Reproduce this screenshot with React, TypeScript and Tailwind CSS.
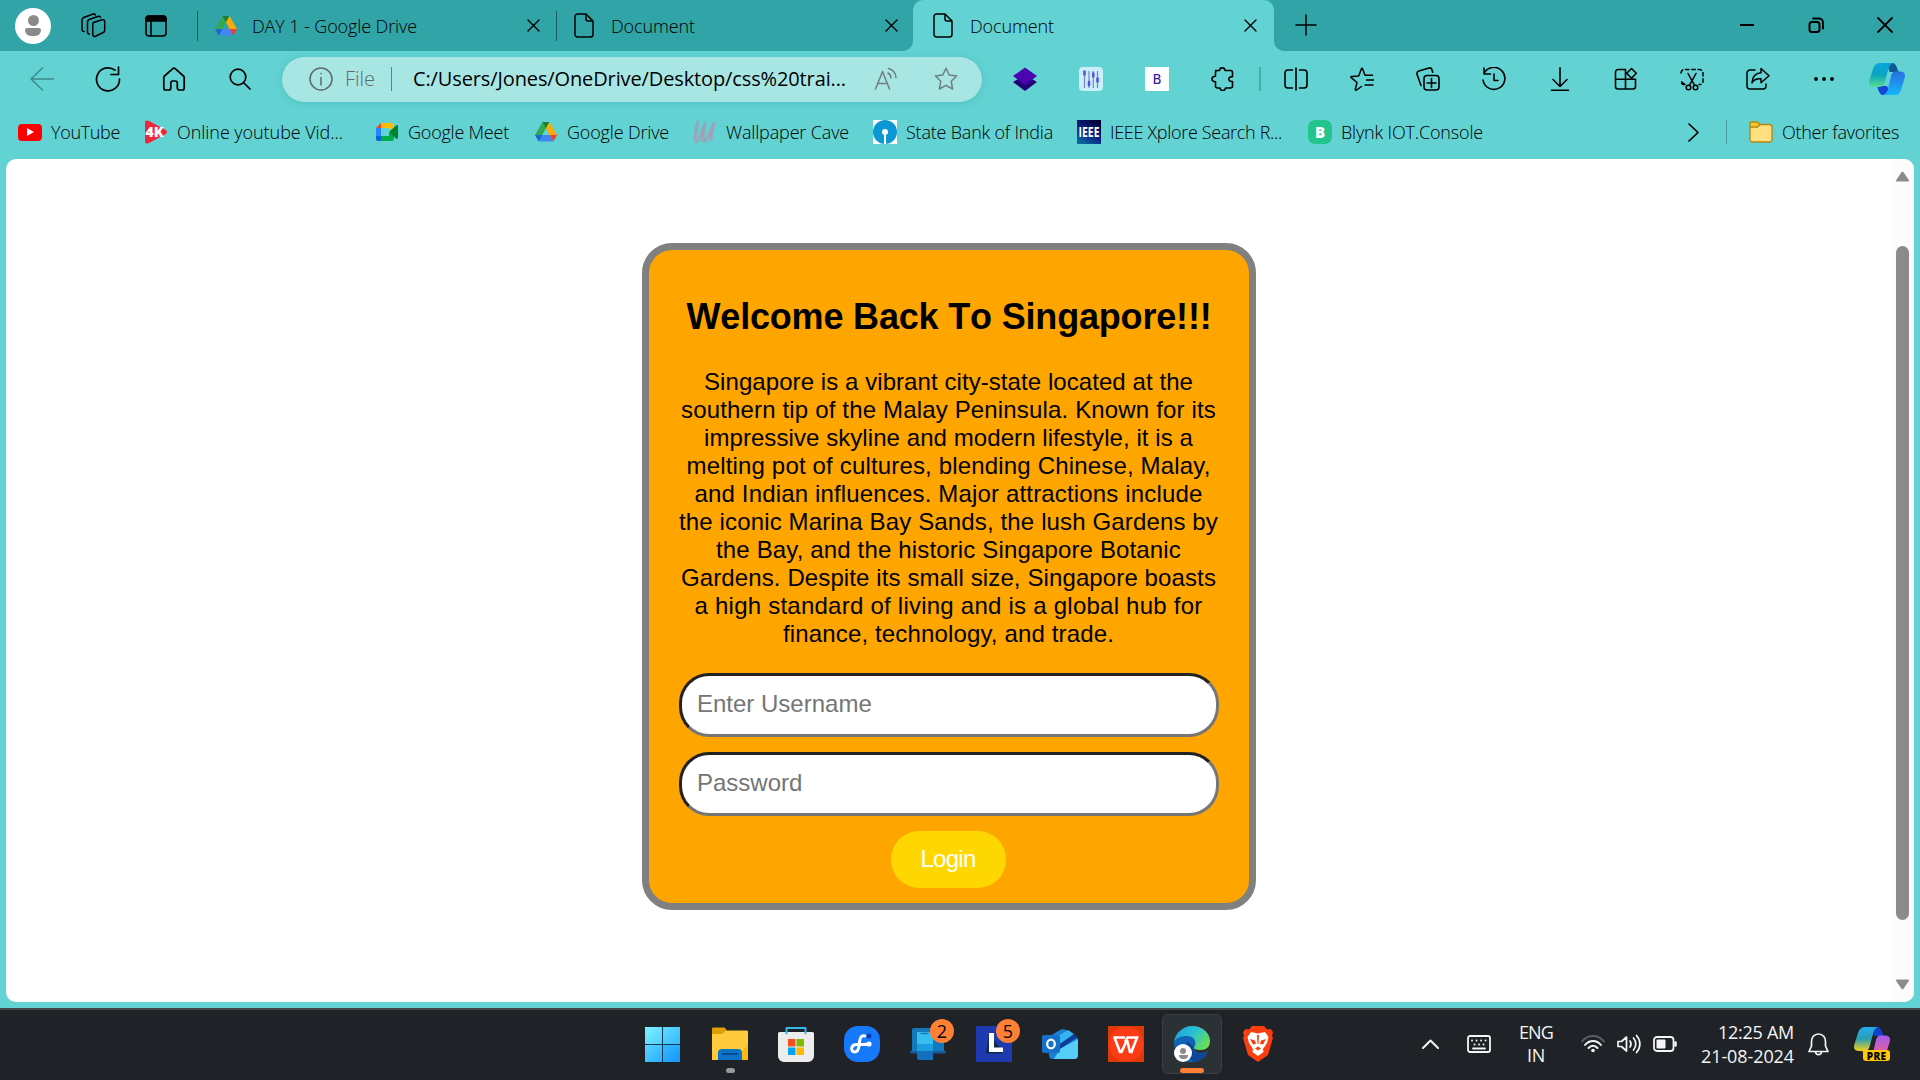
import React, { Fragment, ReactNode, useLayoutEffect, useRef } from "react";

/** Text whose tracking is set at run time so that it fills a given width. */
function Fit({ w, className = "", children }: { w: number; className?: string; children: string }) {
  const ref = useRef<HTMLSpanElement>(null);
  useLayoutEffect(() => {
    const el = ref.current;
    if (!el) return;
    el.style.letterSpacing = "0px";
    const natural = el.getBoundingClientRect().width;
    el.style.letterSpacing = `${(w - natural) / children.length}px`;
  }, [w, children]);
  return (
    <span ref={ref} className={"inline-block whitespace-pre " + className}>
      {children}
    </span>
  );
}

function Icon({ w = 24, h = 24, vb, sw = 1.5, className = "", children }: { w?: number; h?: number; vb?: string; sw?: number; className?: string; children: ReactNode }) {
  return (
    <svg width={w} height={h} viewBox={vb ?? `0 0 ${w} ${h}`} fill="none" stroke="currentColor" strokeWidth={sw} strokeLinecap="round" strokeLinejoin="round" className={"shrink-0 " + className}>
      {children}
    </svg>
  );
}

const DriveIcon = () => (
  <Icon w={22} h={20} sw={0}>
    <path d="M7.5 0h7L11 6.2 7.4 12.5 3.8 19 0 13z" fill="#34a853" />
    <path d="M7.5 0h7L11 6.2z" fill="#188038" />
    <path d="M14.5 0 22 13h-7.4L11 6.3z" fill="#fbab08" />
    <path d="M7.4 13h7.2L18.3 19.5H3.8z" fill="#4285f4" />
    <path d="M14.6 13H22l-3.7 6.5z" fill="#ea4335" />
    <path d="M0 13h7.4l-3.6 6.5z" fill="#1967d2" />
  </Icon>
);

const DocIcon = () => (
  <Icon w={20} h={25} sw={1.5}>
    <path d="M3.5 1h8.5l7 7v13.500a2.500 2.500 0 0 1-2.500 2.500h-13A2.500 2.500 0 0 1 1 21.500v-18A2.500 2.500 0 0 1 3.500 1zM12 1v5a2 2 0 0 0 2 2h5" />
  </Icon>
);

const CloseIcon = () => (
  <Icon w={13} h={13} sw={1.4}>
    <path d="m1 1 11 11M12 1 1 12" />
  </Icon>
);

function Tab({ icon, title, w }: { icon: ReactNode; title: string; w: number }) {
  return (
    <>
      <div className="flex w-[37px] items-center">{icon}</div>
      <Fit w={w} className="leading-6">{title}</Fit>
      <div className="ml-auto flex">
        <CloseIcon />
      </div>
    </>
  );
}

function TabStrip() {
  return (
    <div className="flex h-[51px] bg-[#31a4a8]">
      <div className="flex w-[197px] items-center rounded-br-[10px]">
        <div className="ml-[15px] flex h-9 w-9 flex-col items-center justify-center gap-[2px] rounded-full bg-white">
          <div className="h-[11px] w-[11px] rounded-full bg-[#8a8a8a]" />
          <div className="h-2 w-4 rounded-t-[3px] rounded-b-[8px] bg-[#8a8a8a]" />
        </div>
        <Icon w={26} h={25} sw={1.5} className="ml-[29px]">
          <path d="M13.500 9.500 22 6.800c1.500-.5 2.700.2 2.700 1.700v9c0 1-.5 1.600-1.500 2l-7.700 3.700c-1.500.6-2.700 0-2.700-1.600v-10c0-1.100-.2-1.700.7-2.100z" />
          <path d="M9.500 21c-1.500 0-2-.7-2-2V9c0-1.300.5-2 1.700-2.500L18.500 3.300c1-.3 1.700.1 2 .9M4.200 18.500C2.700 18.500 2 17.700 2 16.500V7c0-1.300.5-2 1.700-2.500L13.200 1c1-.3 1.800.1 2.100 1" />
        </Icon>
        <Icon w={22} h={22} sw={1.600} className="ml-[39px]">
          <rect x="1" y="1" width="20" height="20" rx="3" />
          <path d="M1 6V3.500A2.500 2.500 0 0 1 3.500 1h15A2.500 2.500 0 0 1 21 3.500V6z" fill="currentColor" />
          <path d="M6 6v15" />
        </Icon>
      </div>
      <div className="my-auto h-[30px] w-px bg-[#175e63]" />
      <div className="flex w-[358px] items-center pr-[16px] pl-[17px]">
        <Tab icon={<DriveIcon />} title="DAY 1 - Google Drive" w={165} />
      </div>
      <div className="my-auto h-[30px] w-px bg-[#175e63]" />
      <div className="flex w-[356px] bg-[#62d2d2]">
        <div className="flex w-full items-center rounded-br-[10px] bg-[#31a4a8] pr-[15px] pl-[17px]">
          <Tab icon={<DocIcon />} title="Document" w={84} />
        </div>
      </div>
      <div className="flex w-[361px] bg-[#31a4a8]">
        <div className="flex w-full items-center rounded-t-[10px] bg-[#62d2d2] pr-[17px] pl-[20px]">
          <Tab icon={<DocIcon />} title="Document" w={84} />
        </div>
      </div>
      <div className="flex grow bg-[#62d2d2]">
        <div className="flex grow items-center rounded-bl-[10px] bg-[#31a4a8] pb-px pl-[21px]">
          <Icon w={22} h={22} sw={1.5}>
            <path d="M11 1v20M1 11h20" />
          </Icon>
          <Icon w={16} h={16} sw={2} className="ml-auto">
            <path d="M1 8h14" strokeLinecap="butt" />
          </Icon>
          <Icon w={16} h={16} sw={2} className="ml-[53px]">
            <rect x="1.500" y="5" width="10" height="10" rx="2.500" />
            <path d="M5 1.500h6a4 4 0 0 1 4 4v6" />
          </Icon>
          <Icon w={16} h={16} sw={1.800} className="mr-[27px] ml-[53px]">
            <path d="m1 1 14 14M15 1 1 15" />
          </Icon>
        </div>
      </div>
    </div>
  );
}

const toolIcons: ReactNode[] = [
  <Icon sw={0}>
    <path d="M0 15 12 8l12 7-12 9z" fill="#230078" />
    <path d="M0 9 12 .5 24 9l-12 9z" fill="#4a05b0" />
  </Icon>,
  <Icon sw={1.600}>
    <rect width="24" height="24" rx="4" fill="#c9effb" stroke="none" />
    <path d="M5.500 4v17M10 4v17M14.300 4v17M18.500 4v17" stroke="#7a80d0" strokeLinecap="butt" strokeWidth="1.200" />
    <path d="M5.500 4.500v3M10 15v3M14.300 6.500v3M18.500 11.500v3" stroke="#5b50d8" strokeWidth="2.600" />
  </Icon>,
  <div className="flex h-6 w-6 items-center justify-center bg-white text-[13px] leading-none font-medium text-[#3b1fa0] [font-family:Inter,sans-serif]">B</div>,
  <Icon sw={1.600}>
    <path d="M4.500 3.500h4c.3-3.500 5.200-3.500 5.500 0h5.500a2 2 0 0 1 2 2v4.200c-5-.5-5 5.300 0 4.800v4.500a2 2 0 0 1-2 2H14.500c-.3 3.400-5.200 3.400-5.500 0H6.500a2 2 0 0 1-2-2v-4.300c-4.700-.2-4.700-5.300 0-5.500v-3.700a2 2 0 0 1 2-2" />
  </Icon>,
  <Icon sw={1.600}>
    <path d="M12 1v22M8.500 3H4a3 3 0 0 0-3 3v12a3 3 0 0 0 3 3h4.500M15.500 3H20a3 3 0 0 1 3 3v12a3 3 0 0 1-3 3h-4.500" />
  </Icon>,
  <Icon sw={1.500}>
    <path d="M11.500 19.500 6.500 23c-.7.400-1.400 0-1.200-.8L7 15.500 1.200 10.700c-.6-.5-.4-1.200.5-1.300l7-.5 2.700-7.200c.3-.7.900-.7 1.200 0L15 8.300h7.500M16.500 13H24M15 18h8" />
  </Icon>,
  <Icon sw={1.600}>
    <rect x="8" y="8.500" width="15" height="14.500" rx="3" />
    <path d="M15.500 11.500v9M11 16h9M5 18.500 1 7.300C.7 5.700 1.300 4.500 2.800 4L13 1c1.500-.3 2.500.2 3 1.700l.7 2.500" />
  </Icon>,
  <Icon sw={1.600}>
    <path d="M2 6.500A11 11 0 1 1 1 13M2 1v6h6.500M12 7v6.500h4" />
  </Icon>,
  <Icon sw={1.600}>
    <path d="M12 .8v18M5 12.500l7 7 7-7M3.500 23.200h17" />
  </Icon>,
  <Icon sw={1.600}>
    <path d="M11.500 2.500H4a2.500 2.500 0 0 0-2.500 2.500v14.500A2.500 2.500 0 0 0 4 22h15a2.500 2.500 0 0 0 2.500-2.500v-7.300H1.500M11.500 2.500V22M17.500 1.500l4.800 4.700-4.800 5-4.800-5z" />
  </Icon>,
  <Icon sw={1.500}>
    <path d="M1 6a3.500 3.500 0 0 1 3.500-3.500h15A3.500 3.500 0 0 1 23 6v8.500a3 3 0 0 1-3 3h-1M5 17.500H4a3 3 0 0 1-3-3z" strokeDasharray="3.500 2.800" />
    <path d="m8 6.500 6.500 11.700M16 6.500 9.500 18.200" />
    <circle cx="8.500" cy="20.500" r="2.300" />
    <circle cx="15.500" cy="20.500" r="2.300" />
  </Icon>,
  <Icon sw={1.500}>
    <path d="M9 3H4a3 3 0 0 0-3 3v13a3 3 0 0 0 3 3h13a3 3 0 0 0 3-3v-2M15 1.500l8 7.300-8 7v-4c-5-.3-7.500 1.200-9 4 .3-6 3.500-9.500 9-10z" />
  </Icon>,
  <Icon sw={0}>
    <path d="M4 10.100a1.900 1.900 0 1 1 0 3.800 1.900 1.900 0 0 1 0-3.800zM12 10.100a1.900 1.900 0 1 1 0 3.800 1.900 1.900 0 0 1 0-3.800zM20 10.100a1.900 1.900 0 1 1 0 3.800 1.900 1.900 0 0 1 0-3.800z" fill="currentColor" />
  </Icon>,
];

function Copilot({ pre = false }: { pre?: boolean }) {
  const id = pre ? "pre" : "top";
  return (
    <Icon w={36} h={32} sw={0}>
      <defs>
        <linearGradient id={id + "a"} x1="0" y1="0" x2="0" y2="1">
          <stop offset="0" stopColor={pre ? "#27a9f0" : "#08a4e0"} />
          <stop offset=".5" stopColor={pre ? "#2a9fb0" : "#0aa5c0"} />
          <stop offset="1" stopColor={pre ? "#f5d020" : "#58df90"} />
        </linearGradient>
        <linearGradient id={id + "b"} x1="0" y1="0" x2="0" y2="1">
          <stop offset="0" stopColor={pre ? "#a45cf0" : "#2a6ee0"} />
          <stop offset="1" stopColor={pre ? "#ff5f80" : "#12b6fa"} />
        </linearGradient>
      </defs>
      <path d="M18 0h5c3 0 4 2 5 5l1.500 4h-9z" fill={pre ? "#1440d0" : "#0b5c94"} />
      <path d="M8 23h10l2 4c-2 4-4 5-6 5-3 0-4-3-6-9z" fill={pre ? "#f58a40" : "#1747d8"} />
      <path d="M11 0h13c-3 1-4 3-5 7l-3.500 13c-1 3-3 4-6 4H5c-4 0-6-2-4.500-7L4 6c1-3 3-6 7-6z" fill={`url(#${id}a)`} />
      <path d="M26 8.500h5c4 0 6 2 4.500 7L32 27c-1 3-3 5-6 5H14c3-1 4-3 5-6l3-13c1-3 2-4.500 4-4.500z" fill={`url(#${id}b)`} />
    </Icon>
  );
}

function Toolbar() {
  return (
    <div className="flex h-[58px] items-center pb-[2px]">
      <div className="ml-[30px] flex w-[252px] items-center">
        <Icon className="text-[#3c8b8c]">
          <path d="M24 12H1M12.500 1 1 12l11.500 11" />
        </Icon>
        <Icon w={26} h={26} sw={1.700} className="ml-[41px]">
          <path d="M24.500 13A11.500 11.500 0 1 1 20 4.200M23.500 1v7.500H16" />
        </Icon>
        <Icon sw={1.700} className="ml-[41px]">
          <path d="M10.800 1.700 2.500 9a2 2 0 0 0-.7 1.500V21a2 2 0 0 0 2 2h3a2 2 0 0 0 2-2v-5a2 2 0 0 1 2-2h2.500a2 2 0 0 1 2 2v5a2 2 0 0 0 2 2h2.900a2 2 0 0 0 2-2V10.500a2 2 0 0 0-.7-1.500l-8.300-7.300a1.800 1.800 0 0 0-2.400 0z" />
        </Icon>
        <Icon w={22} h={22} sw={1.700} className="ml-[43px]">
          <circle cx="9" cy="9" r="7.800" />
          <path d="m14.500 14.500 6.500 6.500" />
        </Icon>
      </div>
      <div className="flex h-[45px] w-[700px] items-center rounded-full bg-[#a8e6e4] pl-[27px] shadow-[0_1px_6px_#3a9fa466]">
        <Icon className="text-[#606a6a]">
          <circle cx="12" cy="12" r="11" />
          <path d="M12 10.500V18M12 6.500v.3" />
        </Icon>
        <Fit w={30} className="ml-[12px] text-[20px] text-[#606a6a]">File</Fit>
        <div className="ml-[16px] h-6 w-px bg-[#5f8484]" />
        <Fit w={433} className="ml-[21px] text-[20px] font-normal">C:/Users/Jones/OneDrive/Desktop/css%20trai...</Fit>
        <Icon sw={1.500} className="ml-[28px] text-[#6f7f7f]">
          <path d="M1.500 22 8.500 4.500 15.500 22M4 16.500h9M14 6c2 1 3 3 3 5M14.500 1.500c4 1 7 4.500 7.500 9" />
        </Icon>
        <Icon sw={1.500} className="ml-[36px] text-[#6f7f7f]">
          <path d="m12 1.200 3.200 6.800 7.500 1-5.500 5.200 1.400 7.800-6.600-3.700-6.600 3.700 1.400-7.800L1.300 9l7.500-1z" />
        </Icon>
      </div>
      <div className="ml-[10px] flex items-center">
        {toolIcons.map((icon, i) => (
          <Fragment key={i}>
            {i === 4 && <div className="mr-[2px] ml-[3px] h-6 w-[2px] bg-[#4aabac]" />}
            <div className="flex w-[66px] justify-center">{icon}</div>
          </Fragment>
        ))}
      </div>
      <div className="ml-[12px]">
        <Copilot />
      </div>
    </div>
  );
}

type Bookmark = { label: string; w: number; cell: string; iconCell: string; icon: ReactNode };
const bookmarks: Bookmark[] = [
  {
    label: "YouTube", w: 69, cell: "w-[127px]", iconCell: "w-[33px]",
    icon: (
      <div className="flex h-[17px] w-6 items-center justify-center rounded bg-[#ff0000]">
        <Icon w={7} h={8} sw={0}><path d="m0 0 7 4-7 4z" fill="#fff" /></Icon>
      </div>
    ),
  },
  {
    label: "Online youtube Vid...", w: 166, cell: "w-[231px]", iconCell: "w-[32px]",
    icon: (
      <svg width="22" height="24" viewBox="0 0 22 24" className="overflow-visible">
        <path d="M0 3C0 0 2 0 4 1l15 8c4 2 4 4 0 6L4 23c-2 1-4 1-4-2z" fill="#f0243f" />
        <text x="0.500" y="17" fontSize="14" fontWeight="800" fill="#fff" fontFamily="Open Sans, sans-serif" textLength="18" lengthAdjust="spacingAndGlyphs">4K</text>
      </svg>
    ),
  },
  {
    label: "Google Meet", w: 101, cell: "w-[159px]", iconCell: "w-[32px]",
    icon: (
      <Icon w={22} h={18} sw={0}>
        <path d="M5 0h11a2 2 0 0 1 2 2v4h-5V5H5z" fill="#fbbc04" />
        <path d="M5 0v5H0z" fill="#ea4335" />
        <path d="M0 5h5v8H0z" fill="#2684fc" />
        <path d="M0 13h5v5H2a2 2 0 0 1-2-2z" fill="#0066da" />
        <path d="M5 13h8v-3h5v6a2 2 0 0 1-2 2H5z" fill="#00ac47" />
        <path d="m13 9 7-6.500c1-.8 2-.3 2 .8v11.400c0 1.100-1 1.600-2 .8z" fill="#00832d" />
      </Icon>
    ),
  },
  { label: "Google Drive", w: 102, cell: "w-[158px]", iconCell: "w-[32px]", icon: <DriveIcon /> },
  {
    label: "Wallpaper Cave", w: 123, cell: "w-[180px]", iconCell: "w-[33px]",
    icon: (
      <Icon w={23} h={24} sw={2.8} className="text-[#93a9bd]">
        <path d="M5 2 2 20c1 4 4 0 5-3l5-14-2 18c2 2 4-2 5-5l6-13-3 17" />
        <path d="M3 5 1.500 18M11 6 8.500 18M20 6l-3 11" stroke="#a99bb5" strokeWidth="1.500" />
      </Icon>
    ),
  },
  {
    label: "State Bank of India", w: 147, cell: "w-[204px]", iconCell: "w-[33px]",
    icon: (
      <Icon sw={0}>
        <path d="M0 0h24v24H0z" fill="#fff" />
        <circle cx="12" cy="12" r="12" fill="#0a97d3" />
        <circle cx="12" cy="12" r="3" fill="#fff" />
        <path d="M11 12h2v12h-2z" fill="#fff" />
      </Icon>
    ),
  },
  {
    label: "IEEE Xplore Search R...", w: 172, cell: "w-[231px]", iconCell: "w-[33px]",
    icon: (
      <svg width="24" height="24" className="overflow-visible">
        <defs>
          <linearGradient id="ieee" x1=".8" y1="0" x2=".2" y2="1">
            <stop offset="0" stopColor="#020230" />
            <stop offset=".5" stopColor="#0a1f80" />
            <stop offset="1" stopColor="#0a6aa0" />
          </linearGradient>
        </defs>
        <rect width="24" height="24" fill="url(#ieee)" />
        <text x="1.500" y="16.500" fontSize="14" fontWeight="700" fill="#fff" fontFamily="Open Sans, sans-serif" textLength="21" lengthAdjust="spacingAndGlyphs">IEEE</text>
      </svg>
    ),
  },
  {
    label: "Blynk IOT.Console", w: 142, cell: "w-[190px]", iconCell: "w-[33px]",
    icon: <div className="flex h-6 w-6 items-center justify-center rounded-[7px] bg-[#23c48e] text-[15px] leading-none font-extrabold text-white">B</div>,
  },
];

function BookmarksBar() {
  return (
    <div className="flex h-[50px] items-center pb-[4px] pl-[18px]">
      {bookmarks.map((b) => (
        <div key={b.label} className={"flex shrink-0 items-center " + b.cell}>
          <div className={"flex shrink-0 items-center " + b.iconCell}>{b.icon}</div>
          <Fit w={b.w} className="leading-6">{b.label}</Fit>
        </div>
      ))}
      <Icon w={11} h={19} sw={1.700} className="ml-[190px]">
        <path d="m1 1 9 8.500L1 18" />
      </Icon>
      <div className="ml-[27px] h-6 w-px bg-[#46a2a4]" />
      <Icon w={24} h={22} sw={1.300} className="ml-[22px] text-[#b38810]">
        <path d="M1 5v13.500A2.500 2.500 0 0 0 3.500 21h17a2.500 2.500 0 0 0 2.500-2.500V6a2.500 2.500 0 0 0-2.500-2.500H11z" fill="#ffdf7e" />
        <path d="M1 6V3a2 2 0 0 1 2-2h5.500L11 3.500 8.500 6z" fill="#f7c62e" />
      </Icon>
      <Fit w={117} className="ml-[9px] leading-6">Other favorites</Fit>
    </div>
  );
}

const paragraph: [string, number][] = [
  ["Singapore is a vibrant city-state located at the", 489],
  ["southern tip of the Malay Peninsula. Known for its", 535],
  ["impressive skyline and modern lifestyle, it is a", 489],
  ["melting pot of cultures, blending Chinese, Malay,", 524],
  ["and Indian influences. Major attractions include", 508],
  ["the iconic Marina Bay Sands, the lush Gardens by", 539],
  ["the Bay, and the historic Singapore Botanic", 465],
  ["Gardens. Despite its small size, Singapore boasts", 535],
  ["a high standard of living and is a global hub for", 508],
  ["finance, technology, and trade.", 331],
];

const fieldClass =
  "block h-16 w-full rounded-[30px] border-[3px] border-t-[#222] border-r-[#767676] border-b-[#767676] border-l-[#222] bg-white px-[15px] pb-[3px] text-[24px] placeholder:text-[#757575] placeholder:opacity-100";

function Page() {
  return (
    <div className="mx-[6px] flex h-[843px] overflow-hidden rounded-[10px] bg-white">
      <div className="grow pt-[84px] pl-[636px] font-normal [font-family:'Liberation_Sans',Arial,sans-serif]">
        <div className="flex h-[667px] w-[614px] flex-col items-center rounded-[30px] border-[7px] border-[#808080] bg-[#ffa500] px-[30px]">
          <h1 className="mt-[46px] h-[42px] text-[36px] leading-[42px] font-bold [font-kerning:none]">
            <Fit w={525}>Welcome Back To Singapore!!!</Fit>
          </h1>
          <div className="mt-[30px] mr-px flex flex-col items-center text-[24px] leading-[28px]">
            {paragraph.map(([line, w]) => (
              <Fit key={line} w={w}>{line}</Fit>
            ))}
          </div>
          <form className="mt-[25px] flex w-full flex-col items-center gap-[15px]">
            <input className={fieldClass} placeholder="Enter Username" />
            <input className={fieldClass} placeholder="Password" type="password" />
            <button type="button" className="mr-[2px] h-[57px] w-[115px] rounded-[28px] bg-[#ffd700] pb-[2px] text-[24px] leading-[28px] text-white">
              <Fit w={55}>Login</Fit>
            </button>
          </form>
        </div>
      </div>
      <div className="flex w-[23px] flex-col items-center bg-[#fcfcfc] pt-[12px]">
        <Icon w={15} h={11} sw={2} className="text-[#8b8b8b]">
          <path d="M7.500 1.500 13 9.500H2z" fill="currentColor" />
        </Icon>
        <div className="mt-[64px] h-[674px] w-[13px] rounded-full bg-[#8b8b8b]" />
        <Icon w={15} h={11} sw={2} className="mt-[59px] text-[#8b8b8b]">
          <path d="M7.500 9.500 13 1.500H2z" fill="currentColor" />
        </Icon>
      </div>
    </div>
  );
}

function Badge({ n }: { n: string }) {
  return (
    <div className="absolute -top-[7px] -right-[8px] flex h-6 w-6 items-center justify-center rounded-full bg-[#ff7f35] text-[18px] leading-none text-black">{n}</div>
  );
}

const apps: ReactNode[] = [
  <div className="mr-[3px] grid h-[35px] w-[35px] grid-cols-2 gap-px bg-[#143a52]">
    <div className="bg-linear-to-br from-[#7cf0ff] to-[#4fd0ff]" />
    <div className="bg-linear-to-br from-[#5fdcff] to-[#35b8ff]" />
    <div className="bg-linear-to-br from-[#58d4ff] to-[#2badff]" />
    <div className="bg-linear-to-br from-[#38baff] to-[#0f97fb]" />
  </div>,
  <Icon w={36} h={36} sw={0}>
    <path d="M0 3c0-1 .5-1.500 1.500-1.500h10c1.500 0 2 1 3.500 3L12 8H0z" fill="#e0a004" />
    <path d="M0 8h9c3 0 3-3.500 7-3.500h18.500c1 0 1.500.5 1.500 1.500v28H0z" fill="#ffcb3d" />
    <path d="M24 34 36 18v16z" fill="#fbb917" />
    <path d="M6 34v-7a4 4 0 0 1 4-4h16a4 4 0 0 1 4 4v7z" fill="#0b74c8" />
    <path d="M10.500 28h15" stroke="#063f80" strokeWidth="1.500" />
  </Icon>,
  <Icon w={36} h={36} sw={0}>
    <path d="M0 7.500A1.500 1.500 0 0 1 1.500 6h33A1.500 1.500 0 0 1 36 7.500V30a6 6 0 0 1-6 6H6a6 6 0 0 1-6-6z" fill="#ededed" />
    <path d="M10 13h7.500v7.500H10z" fill="#f25022" />
    <path d="M18.500 13H26v7.500h-7.500z" fill="#7fba00" />
    <path d="M10 21.500h7.500V29H10z" fill="#00a4ef" />
    <path d="M18.500 21.500H26V29h-7.500z" fill="#ffb900" />
    <path d="M8.500 7.500V2h19v5.500" fill="none" stroke="#35b6ea" strokeWidth="2" />
  </Icon>,
  <Icon w={36} h={36} sw={3}>
    <rect width="36" height="36" rx="14" fill="#1678fa" stroke="none" />
    <path d="M21 10c-4-1-5 2-5.500 6L15 20c-.5 4-2 6-4.500 6-4 0-4-7 1.500-7.500 3-.3 8 .5 13-.5" stroke="#fff" />
    <circle cx="25" cy="10" r="2.500" fill="#0b3fb0" stroke="none" />
    <circle cx="25" cy="18" r="2.600" fill="#fff" stroke="none" />
  </Icon>,
  <div className="relative">
    <Icon w={36} h={36} sw={0}>
      <path d="M2 4a2 2 0 0 1 2-2h28a2 2 0 0 1 2 2v21H2z" fill="#1279bd" />
      <path d="M0 25h36v1.500l-1 1H1l-1-1z" fill="#185a98" />
      <path d="M7 6h16v28H9a2 2 0 0 1-2-2z" fill="#1370be" />
      <path d="M7 6h16v12H7z" fill="#37bdf0" />
      <path d="M7 18h16v7H7z" fill="#1a9ee0" />
      <path d="M11 7.500h7" stroke="#1a7db5" strokeWidth="1.500" />
    </Icon>
    <Badge n="2" />
  </div>,
  <div className="relative">
    <Icon w={36} h={36} sw={0}>
      <path d="M0 0h36v36H0z" fill="#1e3ab0" />
      <path d="M13 8 10 27.500h16l1-2z" fill="#0d2a48" />
      <path d="M13 7h5v14.500h9V26H13z" fill="#fff" />
    </Icon>
    <Badge n="5" />
  </div>,
  <Icon w={36} h={36} sw={0}>
    <path d="M6 11 19 3.500c1.500-.7 2.500-.7 4 0L34 10l2 4v15a4 4 0 0 1-4 4H11a4 4 0 0 1-4-4z" fill="#1b7fd4" />
    <path d="M13 12 26 4l6 4-13 9z" fill="#35b3ef" />
    <path d="m18 18 14-10 3 3.500L18 23z" fill="#0e3f98" />
    <path d="m18 23 18-10v16a4 4 0 0 1-4 4H12z" fill="#54d0f8" />
    <rect y="9" width="18" height="18" rx="2" fill="#1470c8" />
    <ellipse cx="9" cy="18" rx="3.800" ry="4.300" stroke="#fff" strokeWidth="2.200" />
  </Icon>,
  <Icon w={36} h={36} sw={0}>
    <path d="M0 0h36v36H0z" fill="#dd3a07" />
    <circle cx="18" cy="18" r="17.500" fill="#fd3b15" />
    <path d="M6.500 11.500H16M6.500 11.500 12 26h1.500L19 14l3 12h1.500L29 11.500H19.500L17.500 15" stroke="#fff" strokeWidth="2.600" strokeLinejoin="miter" />
  </Icon>,
  <div className="relative flex h-[60px] w-[60px] items-center justify-center rounded-[6px] border border-[#3a3f44] bg-[#2c3136]">
    <Icon w={36} h={36} sw={0}>
      <defs>
        <linearGradient id="edge" x1="0" y1=".2" x2="1" y2=".7">
          <stop offset="0" stopColor="#1ba0e0" />
          <stop offset=".5" stopColor="#2cc3d0" />
          <stop offset="1" stopColor="#6ee04a" />
        </linearGradient>
      </defs>
      <path d="M0 16C4 8 15 7 20 13c2 3 1 6-1 8 1 6 8 8 15 4-3 8-10 11-16 11C7 36 0 28 0 16z" fill="#0f64b8" />
      <path d="M13 15c-3 8 0 17 7 21 7-1 11-5 13.500-10.500C26 30 17 27 19 20z" fill="#0b479a" />
      <path d="M0 16C1 7 9 0 18 0c11 0 18 7.500 18 15 0 6-4 9-9 9-5 0-8-1-7-3 3-4 1-11-7-11C7 10 2 12 0 16z" fill="url(#edge)" />
    </Icon>
    <div className="absolute bottom-[11px] left-[11px] flex h-[18px] w-[18px] flex-col items-center justify-center gap-px rounded-full bg-white">
      <div className="h-[6px] w-[6px] rounded-full bg-[#8a8a8a]" />
      <div className="h-1 w-[9px] rounded-b-[4px] bg-[#8a8a8a]" />
    </div>
    <div className="absolute bottom-0 h-[5px] w-6 rounded-full bg-[#ff7f35]" />
  </div>,
  <Icon w={30} h={36} sw={0}>
    <path d="M9 0h12l3 3.500 3.500-.5L30 6l-1 4 1 2-5 17-10 7-10-7L0 12l1-2L0 6l2.500-3 3.500.5z" fill="#fa3e10" />
    <path d="M8 6 4.500 11 6 17l4 6-.5 3 5.500 4 5.500-4-.5-3 4-6 1.500-6L22 6l-7 1.500z" fill="#fff" />
    <path d="m7 13 5 1.500 1 3.500-3 .5zM23 13l-5 1.500-1 3.500 3 .5zM12 22.500l3-2 3 2-3 2zM14 9h2l-.5 9h-1z" fill="#fa3e10" />
  </Icon>,
];

function Taskbar() {
  return (
    <div className="flex h-[72px] border-t-2 border-[#43474a] bg-[#1f2328] font-normal text-[#f5f5f5]">
      <div className="ml-[631px] flex w-[660px] shrink-0">
        {apps.map((app, i) => (
          <div key={i} className="relative flex h-[68px] w-[66px] items-center justify-center">
            {app}
            {i === 1 && <div className="absolute bottom-[5px] h-[5px] w-[9px] rounded-full bg-[#96999c]" />}
          </div>
        ))}
      </div>
      <div className="flex h-[68px] grow items-center">
        <Icon w={17} h={10} sw={2} className="ml-[131px]">
          <path d="m1 9 7.500-7.500L16 9" />
        </Icon>
        <Icon w={24} h={18} sw={1.800} className="ml-[28px]">
          <rect x="1" y="1" width="22" height="16" rx="2" />
          <path d="M5 5.500h.1M9.500 5.500h.1M14 5.500h.1M18.500 5.500h.1M7.500 9.500h.1M12 9.500h.1M16.500 9.500h.1M6 13.500h12" />
        </Icon>
        <div className="ml-[28px] flex w-[34px] flex-col items-center pb-px text-[18px] leading-[23px]">
          <Fit w={34}>ENG</Fit>
          <Fit w={18}>IN</Fit>
        </div>
        <Icon w={24} h={18} sw={1.900} className="ml-[28px]">
          <path d="M1 6.500C7-.8 17-.8 23 6.500" stroke="#5a5e62" />
          <path d="M4 10c4.500-5.300 11.500-5.300 16 0M7.500 13c2.700-3 6.300-3 9 0" />
          <circle cx="12" cy="15.500" r="1.800" fill="currentColor" stroke="none" />
        </Icon>
        <Icon w={24} h={20} sw={1.700} className="ml-[12px]">
          <path d="M1 7.500v5h3.500l5 4.500V3l-5 4.500zM13 7c1.300 1.800 1.300 4.200 0 6M16.500 4c3 3.500 3 8.500 0 12M19.500 1.500c4.500 5 4.500 12 0 17" />
        </Icon>
        <Icon w={24} h={16} sw={1.800} className="ml-[12px]">
          <rect x="1" y="1" width="19.500" height="14" rx="3" />
          <rect x="3.500" y="3.500" width="9" height="9" rx="1" fill="currentColor" stroke="none" />
          <path d="M22.500 6.500v3" strokeWidth="2.500" />
        </Icon>
        <div className="ml-[17px] flex w-[100px] flex-col items-end pb-px text-[18px] leading-[24px]">
          <Fit w={76}>12:25 AM</Fit>
          <Fit w={93}>21-08-2024</Fit>
        </div>
        <Icon w={21} h={23} sw={1.700} className="ml-[14px]">
          <path d="M10.500 1C6 1 3.500 4.500 3.500 8.500V13L1 18.500h19L17.500 13V8.500C17.500 4.500 15 1 10.500 1zM7.500 19c.5 3.500 5.500 3.500 6 0" />
        </Icon>
        <div className="relative ml-[25px] h-[34px]">
          <Copilot pre />
          <div className="absolute right-0 bottom-0 flex h-[11px] w-[27px] items-center justify-center rounded-[3px] bg-[#ffc60a] text-[10px] leading-none font-extrabold tracking-wide text-black">PRE</div>
        </div>
      </div>
    </div>
  );
}

export default function App() {
  return (
    <div className="h-[1080px] w-[1920px] overflow-hidden bg-[#62d2d2] text-[18px] font-light text-black [font-family:'Open_Sans','Noto_Sans',sans-serif]">
      <TabStrip />
      <Toolbar />
      <BookmarksBar />
      <Page />
      <div className="h-[6px]" />
      <Taskbar />
    </div>
  );
}
